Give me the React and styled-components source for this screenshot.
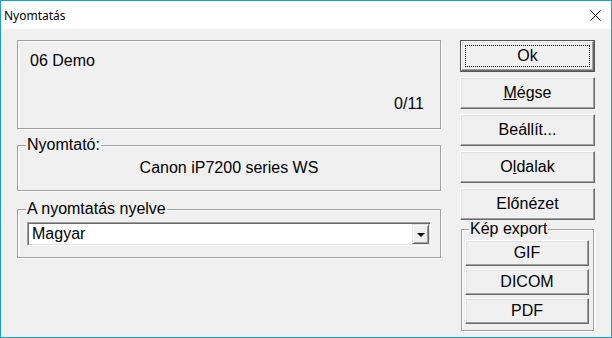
import React from "react";
import styled, { createGlobalStyle } from "styled-components";

const GlobalStyle = createGlobalStyle`
  html, body {
    margin: 0;
    padding: 0;
    background: #f0f0f0;
  }
  body {
    font-family: "Liberation Sans", Arial, sans-serif;
    font-size: 16px;
    color: #000;
  }
`;

const Window = styled.div`
  width: 612px;
  height: 338px;
  box-sizing: border-box;
  border: 1px solid #1a9fc9;
  background: #f0f0f0;
  display: flex;
  flex-direction: column;
`;

const TitleBar = styled.div`
  height: 28px;
  background: #fff;
  display: flex;
  align-items: center;
  justify-content: space-between;
  padding: 0 10px 0 3px;
  font-family: "Noto Sans", "Open Sans", sans-serif;
  font-size: 12px;
`;

const Body = styled.div`
  flex: 1;
  display: flex;
  gap: 19px;
  padding: 11px 0 0 16px;
`;

const LeftCol = styled.div`
  width: 424px;
  display: flex;
  flex-direction: column;
`;

const RightCol = styled.div`
  width: 135px;
  display: flex;
  flex-direction: column;
  gap: 5px;
`;

const etched = `
  border: 1px solid #a0a0a0;
  box-shadow: inset 1px 1px 0 #fff, 1px 1px 0 #fff;
`;

const InfoPanel = styled.div`
  ${etched}
  height: 89px;
  box-sizing: border-box;
  display: flex;
  flex-direction: column;
  padding: 11px 16px 15px 12px;
  line-height: 18px;
`;

const Count = styled.div`
  margin-top: auto;
  text-align: right;
`;

const Group = styled.div`
  ${etched}
  position: relative;
  box-sizing: border-box;
  height: ${(p) => p.$h}px;
  margin: ${(p) => p.$m || "0"};
  padding: ${(p) => p.$pad || "0"};
  line-height: 18px;
`;

const Legend = styled.span`
  position: absolute;
  top: -10px;
  left: ${(p) => p.$left || 8}px;
  padding: 0 1px;
  background: #f0f0f0;
  line-height: 18px;
  white-space: nowrap;
`;

const PrinterName = styled.div`
  text-align: center;
`;

const Combo = styled.div`
  height: 24px;
  box-sizing: border-box;
  background: #fff;
  border: 1px solid;
  border-color: #a0a0a0 #fff #fff #a0a0a0;
  box-shadow: inset 1px 1px 0 #696969, inset -1px -1px 0 #e3e3e3;
  display: flex;
  align-items: stretch;
  padding: 1px;
`;

const ComboText = styled.div`
  flex: 1;
  padding-left: 3px;
  line-height: 20px;
`;

const DropButton = styled.div`
  width: 17px;
  box-sizing: border-box;
  background: #f0f0f0;
  border: 1px solid;
  border-color: #e3e3e3 #696969 #696969 #e3e3e3;
  box-shadow: inset 1px 1px 0 #fff, inset -1px -1px 0 #a0a0a0;
  display: flex;
  align-items: center;
  justify-content: center;
`;

const Arrow = styled.span`
  width: 0;
  height: 0;
  border-left: 4px solid transparent;
  border-right: 4px solid transparent;
  border-top: 4px solid #000;
  margin-top: 1px;
`;

const Button = styled.button`
  height: ${(p) => p.$h || 32}px;
  width: 100%;
  box-sizing: border-box;
  flex-shrink: 0;
  margin: 0;
  padding: 0;
  font: inherit;
  font-size: 16px;
  color: #000;
  background: #f0f0f0;
  border: 1px solid;
  border-color: #fff #696969 #696969 #fff;
  box-shadow: inset -1px -1px 0 #a0a0a0, inset 1px 1px 0 #e3e3e3;
  display: flex;
  align-items: center;
  justify-content: center;
`;

const DefaultFrame = styled.div`
  height: 32px;
  box-sizing: border-box;
  border: 1px solid #555;
  flex-shrink: 0;
  display: flex;
`;

const DefaultButton = styled(Button)`
  height: 30px;
  padding: 3px;
`;

const FocusRect = styled.span`
  flex: 1;
  align-self: stretch;
  border: 1px dotted #000;
  display: flex;
  align-items: center;
  justify-content: center;
`;

const ExportList = styled.div`
  display: flex;
  flex-direction: column;
  gap: 3px;
`;

const CloseIcon = () => (
  <svg width="11" height="11" viewBox="0 0 11 11">
    <path d="M0.5 0.5 L10.5 10.5 M10.5 0.5 L0.5 10.5" stroke="#000" strokeWidth="1" />
  </svg>
);

export default function App() {
  return (
    <>
      <GlobalStyle />
      <Window>
        <TitleBar>
          <span>Nyomtatás</span>
          <CloseIcon />
        </TitleBar>
        <Body>
          <LeftCol>
            <InfoPanel>
              <div>06 Demo</div>
              <Count>0/11</Count>
            </InfoPanel>
            <Group $h={46} $m="16px 0 0" $pad="13px 0 0">
              <Legend>Nyomtató:</Legend>
              <PrinterName>Canon iP7200 series WS</PrinterName>
            </Group>
            <Group $h={49} $m="18px 0 0" $pad="12px 9px 0">
              <Legend>A nyomtatás nyelve</Legend>
              <Combo>
                <ComboText>Magyar</ComboText>
                <DropButton>
                  <Arrow />
                </DropButton>
              </Combo>
            </Group>
          </LeftCol>
          <RightCol>
            <DefaultFrame>
              <DefaultButton>
                <FocusRect>Ok</FocusRect>
              </DefaultButton>
            </DefaultFrame>
            <Button>
              <span>
                <u>M</u>égse
              </span>
            </Button>
            <Button>Beállít...</Button>
            <Button>
              <span>
                O<u>l</u>dalak
              </span>
            </Button>
            <Button>Előnézet</Button>
            <Group $h={102} $m="4px 1px 0" $pad="10px 4px 0 3px">
              <Legend $left={7}>Kép export</Legend>
              <ExportList>
                <Button $h={26}>GIF</Button>
                <Button $h={26}>DICOM</Button>
                <Button $h={26}>PDF</Button>
              </ExportList>
            </Group>
          </RightCol>
        </Body>
      </Window>
    </>
  );
}
